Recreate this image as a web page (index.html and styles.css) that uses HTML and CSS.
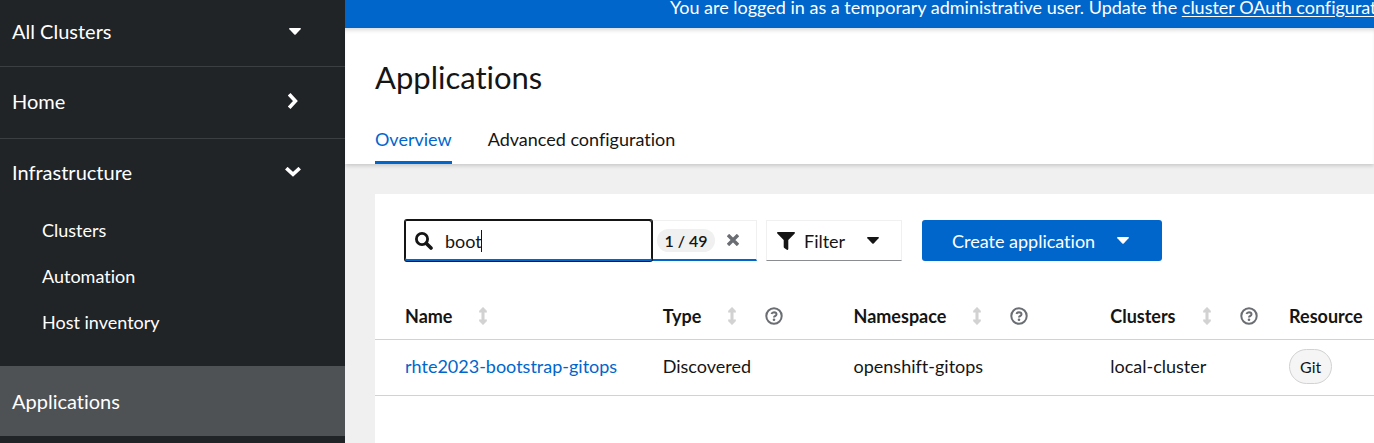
FILE: index.html
```html
<!DOCTYPE html>
<html lang="en">
<head>
<meta charset="utf-8">
<meta name="viewport" content="width=device-width, initial-scale=1">
<title>Applications</title>
<link rel="stylesheet" href="styles.css">
</head>
<body>
<svg class="sprite" aria-hidden="true">
  <symbol id="caret" viewBox="0 0 12 7"><path d="M.8 0h10.4q1.2.2.4 1.2L6.7 6.5q-.7.7-1.4 0L.4 1.2Q-.4.2.8 0z"/></symbol>
  <symbol id="chevron" viewBox="0 0 16 10"><path d="M2.6 2.4 8 7.4l5.4-5" fill="none" stroke="currentColor" stroke-width="3.6" stroke-linecap="square"/></symbol>
  <symbol id="sort" viewBox="0 0 8 18"><path d="M4 .3 7.6 4v1.2H5.2v7.6h2.4V14L4 17.7.4 14v-1.2h2.4V5.2H.4V4z" stroke="currentColor" stroke-width=".6" stroke-linejoin="round"/></symbol>
  <symbol id="help" viewBox="0 0 18 18"><circle cx="9" cy="9" r="7.7" fill="none" stroke="currentColor" stroke-width="2"/><path d="M6.5 7Q7 5.2 9 5.2q2.5.1 2.5 2 0 1.1-1.3 1.8Q9 9.6 9 10.5" fill="none" stroke="currentColor" stroke-width="2"/><circle cx="9" cy="12.8" r="1.3"/></symbol>
</svg>
<div class="app">
  <nav class="sidebar" aria-label="Main">
    <button class="nav-item switcher">All Clusters <svg class="caret"><use href="#caret"/></svg></button>
    <button class="nav-item home">Home <svg class="chevron right"><use href="#chevron"/></svg></button>
    <div class="nav-group">
      <button class="nav-item infra" aria-expanded="true">Infrastructure <svg class="chevron"><use href="#chevron"/></svg></button>
      <div class="subnav">
        <a href="#clusters">Clusters</a>
        <a href="#automation">Automation</a>
        <a href="#hosts">Host inventory</a>
      </div>
    </div>
    <a class="nav-item current" href="#applications" aria-current="page">Applications</a>
  </nav>
  <main class="main">
    <div class="banner">You are logged in as a temporary administrative user. Update the <a href="#oauth">cluster OAuth configuration</a></div>
    <header class="page-header">
      <h1>Applications</h1>
      <div class="tabs">
        <a class="tab active" href="#overview">Overview</a>
        <a class="tab" href="#advanced">Advanced configuration</a>
      </div>
    </header>
    <section class="content">
      <div class="card">
        <div class="toolbar">
          <div class="search">
            <div class="search-box">
              <svg class="search-icon" viewBox="0 0 18 18"><circle cx="7" cy="7" r="5.6" fill="none" stroke="currentColor" stroke-width="2.8"/><path d="m11.4 11.4 4.6 4.6" stroke="currentColor" stroke-width="3.6" stroke-linecap="round"/></svg>
              <input type="text" value="boot" aria-label="Search">
              <span class="cursor"></span>
            </div>
            <span class="count">1 / 49</span>
            <button class="clear" aria-label="Clear"><svg viewBox="0 0 12 12"><path d="m2.2 2.2 7.6 7.6m0-7.6-7.6 7.6" stroke="currentColor" stroke-width="3.4" stroke-linecap="square"/></svg></button>
          </div>
          <button class="filter"><svg class="funnel" viewBox="0 0 18 18"><path d="M.8 0h16.4q1.2.5.5 1.6L11.3 8v9q-.3 1.2-1.5.8l-2.5-1.9q-.6-.4-.6-1.1V8L.3 1.6Q-.4.5.8 0z"/></svg>Filter <svg class="caret"><use href="#caret"/></svg></button>
          <button class="create">Create application <svg class="caret"><use href="#caret"/></svg></button>
        </div>
        <table>
          <colgroup><col class="c-name"><col class="c-type"><col class="c-space"><col class="c-clusters"><col></colgroup>
          <thead>
            <tr>
              <th scope="col"><div class="head">Name <svg class="sort"><use href="#sort"/></svg></div></th>
              <th scope="col"><div class="head">Type <svg class="sort"><use href="#sort"/></svg><svg class="help"><use href="#help"/></svg></div></th>
              <th scope="col"><div class="head">Namespace <svg class="sort"><use href="#sort"/></svg><svg class="help"><use href="#help"/></svg></div></th>
              <th scope="col"><div class="head">Clusters <svg class="sort"><use href="#sort"/></svg><svg class="help"><use href="#help"/></svg></div></th>
              <th scope="col"><div class="head">Resource</div></th>
            </tr>
          </thead>
          <tbody>
            <tr>
              <td><a href="#app">rhte2023-bootstrap-gitops</a></td>
              <td>Discovered</td>
              <td>openshift-gitops</td>
              <td>local-cluster</td>
              <td><span class="chip">Git</span></td>
            </tr>
          </tbody>
        </table>
      </div>
    </section>
  </main>
</div>
</body>
</html>
```
FILE: styles.css
```css
* { box-sizing: border-box; }
body {
  margin: 0;
  font: 18px/26px Lato, "Open Sans", sans-serif;
  font-variant-ligatures: none;
  color: #151515;
  background: #f0f0f0;
}
button, input { font: inherit; font-variant-ligatures: none; color: inherit; border: 0; background: none; padding: 0; margin: 0; }
a { color: #06c; text-decoration: none; }
svg { display: block; flex: none; fill: currentColor; }
.sprite { position: absolute; width: 0; height: 0; }
.caret { width: 12px; height: 7px; }

.app { display: flex; min-height: 100vh; }
.sidebar { flex: none; width: 345px; background: #212427; color: #fff; }
.nav-item {
  display: flex;
  align-items: center;
  justify-content: space-between;
  width: 100%;
  padding: 0 44px 0 12px;
  font-size: 20px;
  color: #fff;
}
.switcher { height: 67px; padding-bottom: 4px; border-bottom: 1px solid #3c3f42; }
.home { height: 72px; padding-bottom: 4px; border-bottom: 1px solid #3c3f42; }
.infra { height: 68px; padding-bottom: 3px; }
.chevron { width: 16px; height: 10px; }
.right { transform: rotate(-90deg); }
.nav-group { padding-bottom: 21px; }
.subnav { display: grid; }
.subnav a { padding: 10px 42px; color: #fff; }
.current { height: 70px; background: #4f5255; }

.main { flex: 1; min-width: 0; }
.banner {
  height: 28px;
  padding-left: 325px;
  line-height: 14px;
  white-space: nowrap;
  overflow: hidden;
  background: #06c;
  color: #fff;
}
.banner a { color: #fff; text-decoration: underline; text-underline-offset: 2px; }
.page-header {
  position: relative;
  padding: 29px 30px 0;
  background: #fff;
  box-shadow: 0 2px 4px rgba(0, 0, 0, .16), inset 0 4px 4px -2px rgba(0, 0, 0, .16);
}
h1 { margin: 0; font-size: 31px; line-height: 40px; font-weight: 400; }
.tabs { display: flex; gap: 36px; padding-top: 29px; }
.tab { padding-bottom: 9px; border-bottom: 3px solid transparent; color: #151515; }
.tab.active { color: #06c; border-color: #06c; }

.content { padding: 30px 0 0 30px; }
.card { min-height: 249px; padding-top: 26px; background: #fff; overflow: hidden; }
.toolbar { display: flex; padding-left: 30px; }
.toolbar button { display: flex; align-items: center; }
.search {
  display: flex;
  align-items: center;
  width: 352px;
  height: 41px;
  border: 1px solid #f0f0f0;
  border-left: 0;
  border-bottom: 2px solid #06c;
}
.search-box {
  position: relative;
  display: flex;
  align-items: center;
  gap: 12px;
  width: 247px;
  height: 41px;
  padding-left: 10px;
  margin-top: 1px;
  border-radius: 2px;
  box-shadow: inset 0 -2px #06c, 0 0 0 1px #151515, inset 1px 0 #151515, inset -1px 1px #151515;
}
.search-icon { width: 18px; height: 18px; }
.search-box input { flex: 1; min-width: 0; height: 36px; outline: 0; }
.cursor { position: absolute; left: 76px; top: 10px; width: 1px; height: 22px; background: #151515; }
.count {
  width: 58px;
  margin-left: 5px;
  border-radius: 12px;
  background: #f0f0f0;
  font-size: 16px;
  line-height: 23px;
  font-weight: 600;
  text-align: center;
}
.clear { margin-left: 12px; color: #6a6e73; }
.clear svg { width: 12px; height: 12px; }
.filter {
  width: 136px;
  height: 41px;
  margin-left: 9px;
  padding: 0 22px 0 10px;
  border: 1px solid #f0f0f0;
  border-bottom-color: #8a8d90;
}
.filter .funnel { width: 18px; height: 18px; margin-right: 9px; }
.filter .caret, .create .caret { margin-left: auto; }
.create {
  width: 240px;
  height: 41px;
  margin-left: 20px;
  padding: 0 33px 0 30px;
  border-radius: 3px;
  background: #06c;
  color: #fff;
}

table { width: 100%; margin-top: 32px; border-collapse: collapse; table-layout: fixed; }
.c-name { width: 27.4%; }
.c-type { width: 19.1%; }
.c-space { width: 25.7%; }
.c-clusters { width: 17.9%; }
th, td { height: 56px; padding: 0 0 0 14px; border-bottom: 1px solid #d2d2d2; text-align: left; white-space: nowrap; }
th { height: 46px; }
th:first-child, td:first-child { padding-left: 30px; }
td { padding-bottom: 2px; }
.head { display: flex; align-items: center; }
.sort { width: 8px; height: 18px; margin-left: 27px; color: #d2d2d2; }
.help { width: 18px; height: 18px; margin-left: 29px; color: #6a6e73; }
.chip {
  display: inline-block;
  padding: 0 10px;
  border: 1px solid #d2d2d2;
  border-radius: 18px;
  background: #f5f5f5;
  font-size: 16px;
  line-height: 33px;
}
```
